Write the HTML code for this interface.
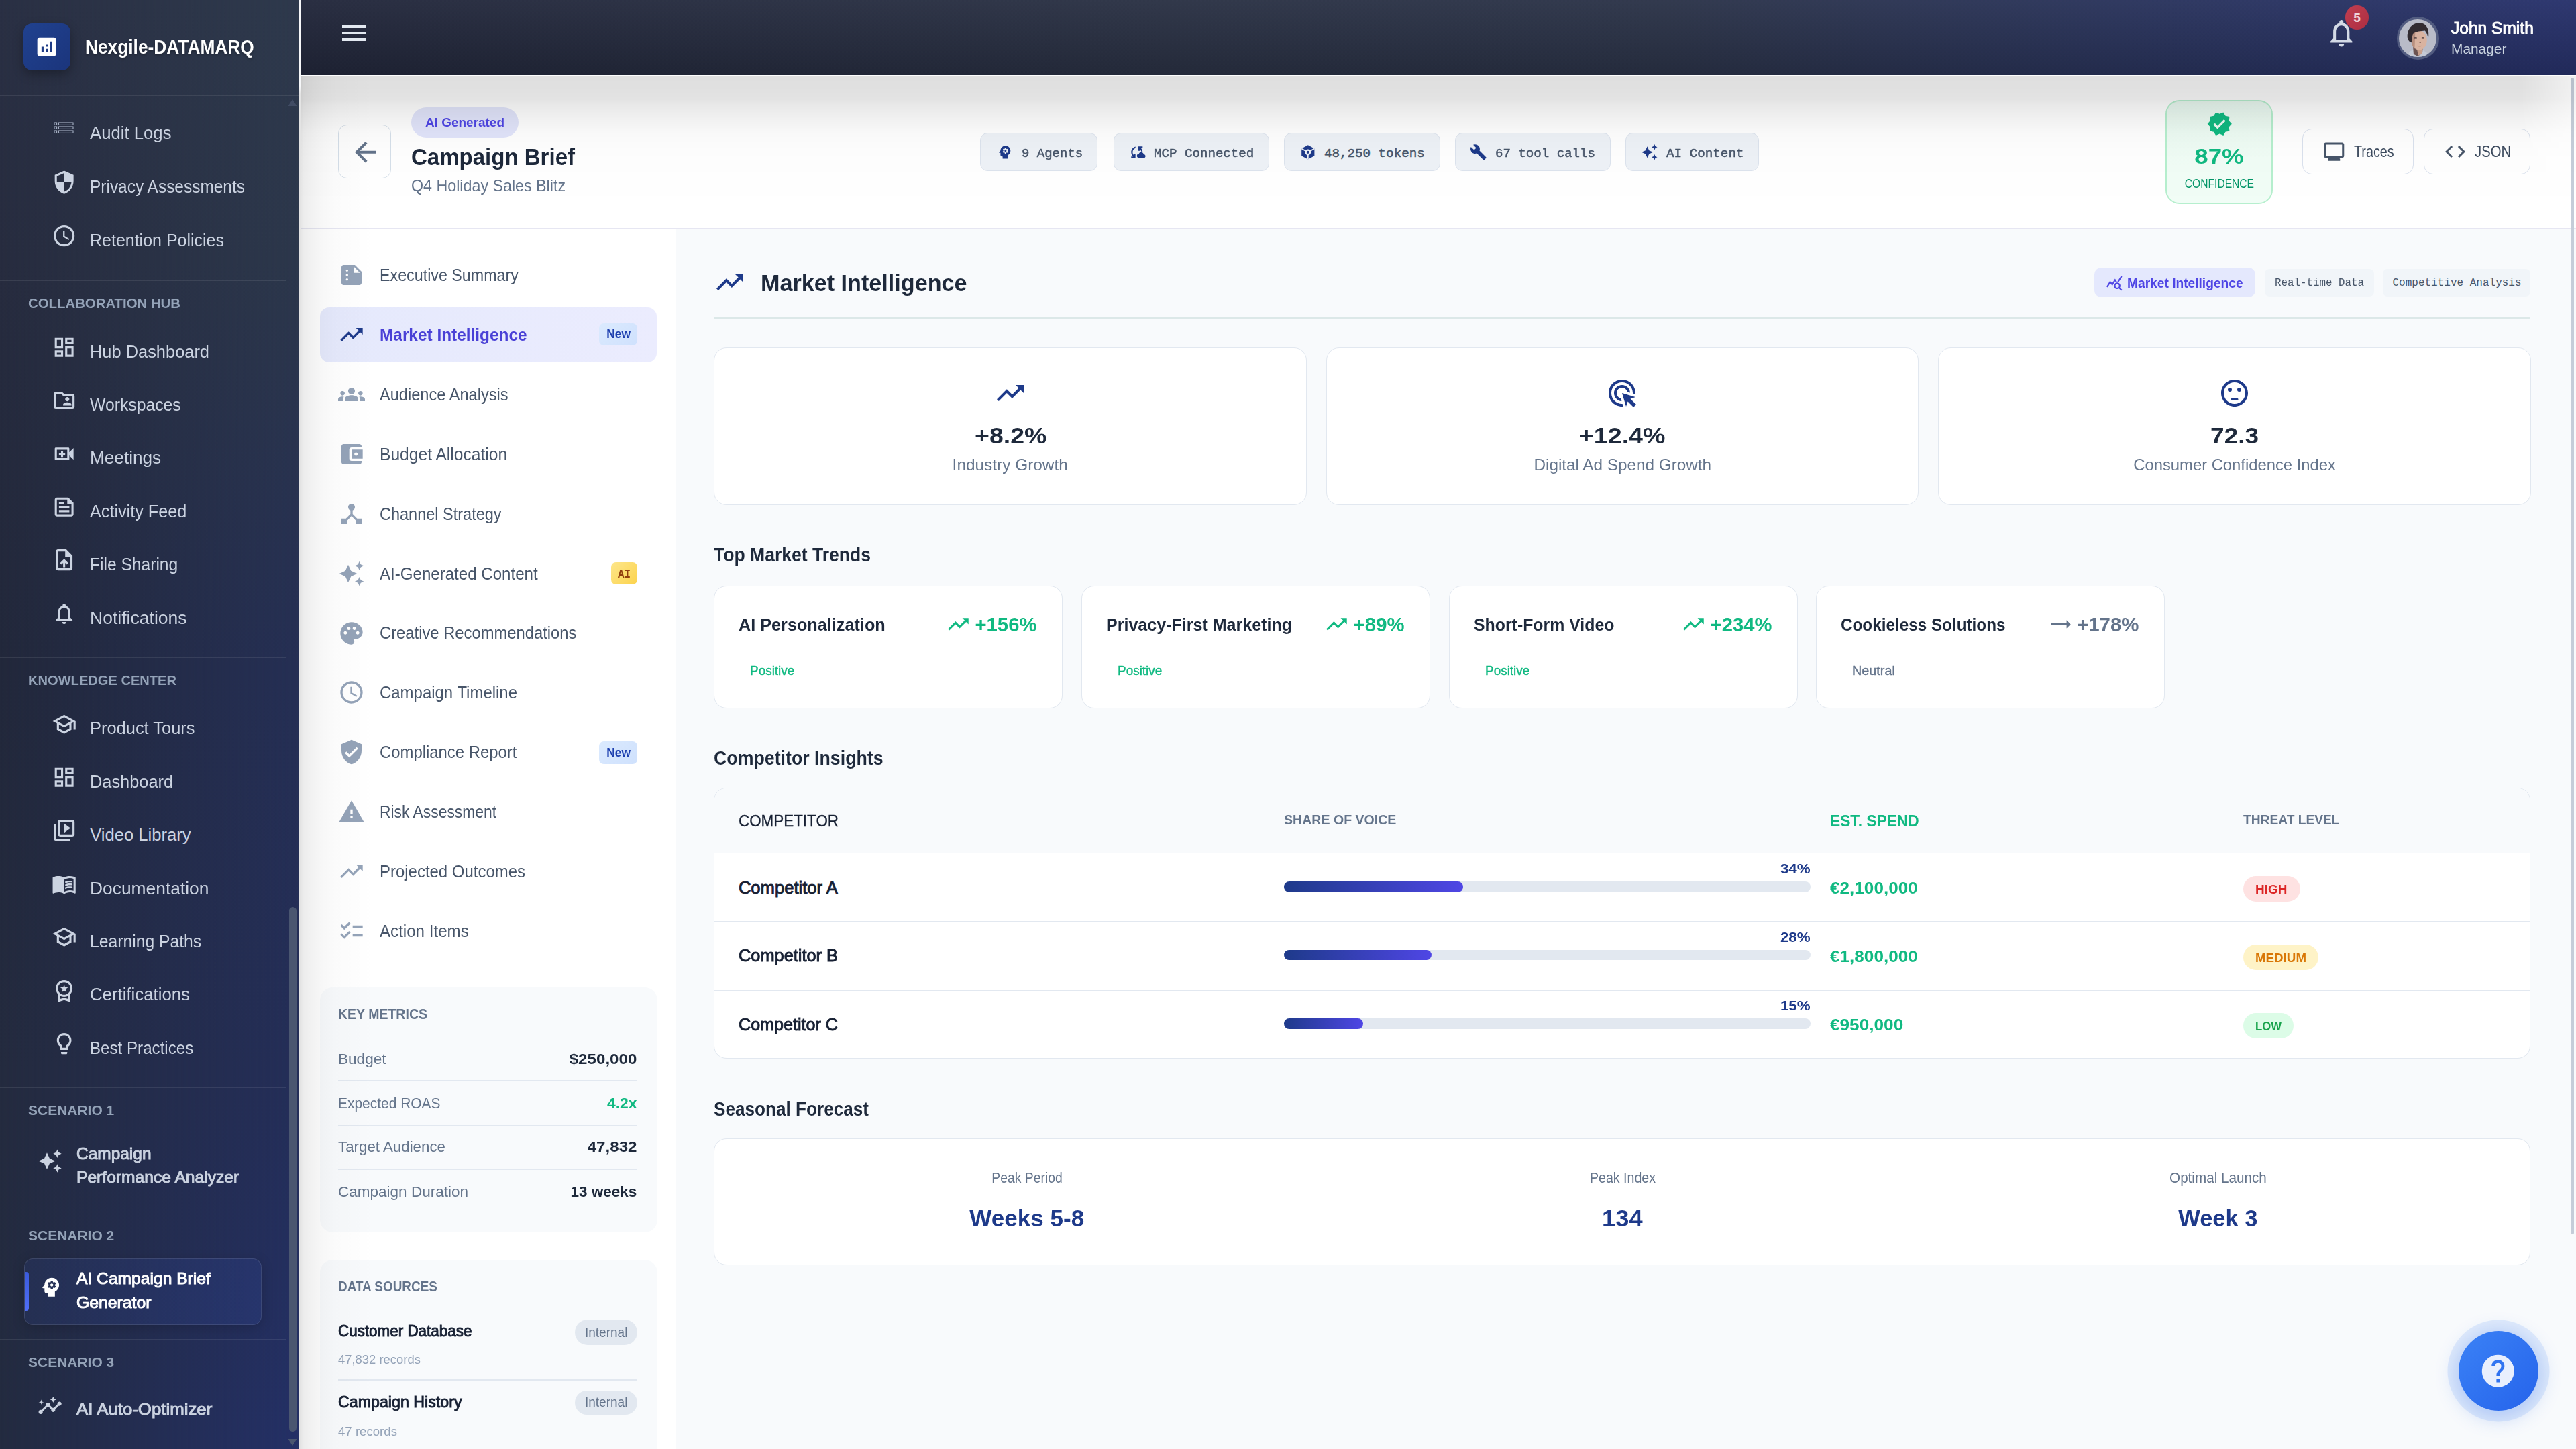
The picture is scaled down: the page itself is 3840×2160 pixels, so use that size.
<!DOCTYPE html>
<html lang="en"><head><meta charset="utf-8"><title>Campaign Brief - Nexgile-DATAMARQ</title>
<style>
html,body{margin:0;padding:0}
body{width:3840px;height:2160px;overflow:hidden;background:#f8fafc;font-family:"Liberation Sans",Arial,sans-serif;position:relative}
div,span,svg,nav,aside,header,main,section{position:absolute;box-sizing:border-box;display:block}
span{white-space:nowrap;line-height:1}
.card{background:#fff;border:1.6px solid #e2e8f0;border-radius:19px}
.chip{background:#eef2f7;border:1.6px solid #dde4ee;border-radius:11px}
.pill{border-radius:999px}
.hr{height:1.6px;background:#e2e8f0}
span.m{font-family:"Liberation Mono","DejaVu Sans Mono",monospace}
.sdiv{height:1.6px;background:rgba(255,255,255,.09);left:0;width:426px}

</style></head>
<body>
<main style="left:0;top:0;width:3840px;height:2160px">
<div style="left:448px;top:112px;width:3392px;height:228.5px;background:#fff;border-bottom:1.6px solid #e6e6f2"></div>
<div style="left:446px;top:0px;width:2px;height:2160px;background:linear-gradient(180deg,#f6f7f9 0,#f6f7f9 128px,#e3e3e3 140px,#e3e3e3 100%)"></div>
<div style="left:448px;top:340.5px;width:559.8px;height:1820px;background:#fff;border-right:1.6px solid #e2e8f0"></div>
<div style="left:3832px;top:116px;width:5.2px;height:1724px;background:#c5cdd9;border-radius:3px"></div>
<div style="left:504.2px;top:186.3px;width:79px;height:80px;background:#fff;border:1.6px solid #d6e0ea;border-radius:13px"></div>
<svg style="left:520.5px;top:202.5px;" width="47.5" height="47.5" viewBox="0 0 24 24"><path fill="#64748b" d="M20 11H7.83l5.59-5.59L12 4l-8 8 8 8 1.41-1.41L7.83 13H20v-2z"/></svg>
<div style="left:613px;top:160.4px;width:159.6px;height:44.5px;background:#e2e5fb;border-radius:23px"></div>
<span style="left:633.6px;top:173.2px;font-size:19.2px;color:#4f46e5;font-weight:700;transform:scaleX(0.9880);transform-origin:0 50%;">AI Generated</span>
<span style="left:613.0px;top:215.5px;font-size:35.2px;color:#1e293b;font-weight:700;transform:scaleX(0.9383);transform-origin:0 50%;">Campaign Brief</span>
<span style="left:613.0px;top:264.9px;font-size:24px;color:#64748b;transform:scaleX(0.9687);transform-origin:0 50%;">Q4 Holiday Sales Blitz</span>
<div class="chip" style="left:1461.3px;top:197.5px;width:174.7px;height:57px"></div>
<svg style="left:1485px;top:213.5px;" width="25.6" height="25.6" viewBox="0 0 24 24"><path fill="#1e3a8a" d="M13 8.57c-.79 0-1.43.64-1.43 1.43s.64 1.43 1.43 1.43 1.43-.64 1.43-1.43-.64-1.43-1.43-1.43zM13 3C9.25 3 6.2 5.94 6.02 9.64L4.1 12.2c-.25.33-.01.8.4.8H6v3c0 1.1.9 2 2 2h1v3h7v-4.68c2.36-1.12 4-3.53 4-6.32 0-3.87-3.13-7-7-7zm3 7c0 .13-.01.26-.02.39l.83.66c.08.06.1.16.05.25l-.8 1.39c-.05.09-.16.12-.24.09l-.99-.4c-.21.16-.43.29-.67.39L14 13.83c-.01.1-.1.17-.2.17h-1.6c-.1 0-.18-.07-.2-.17l-.15-1.06c-.25-.1-.47-.23-.68-.39l-.99.4c-.09.03-.2 0-.25-.09l-.8-1.39c-.05-.08-.03-.19.05-.25l.84-.66c-.01-.13-.02-.26-.02-.39s.02-.27.04-.39l-.85-.66c-.08-.06-.1-.16-.05-.26l.8-1.38c.05-.09.15-.12.24-.09l1 .4c.2-.15.43-.29.67-.39L12 6.17c.02-.1.1-.17.2-.17h1.6c.1 0 .18.07.2.17l.15 1.06c.24.1.46.23.67.39l1-.4c.09-.03.2 0 .24.09l.8 1.38c.05.09.03.2-.05.26l-.85.66c.03.12.04.25.04.39z"/></svg>
<span class="m" style="left:1522.8px;top:219.6px;font-size:19.2px;color:#475569;transform:scaleX(0.9900);transform-origin:0 50%;-webkit-text-stroke:.5px #475569;">9 Agents</span>
<div class="chip" style="left:1659.5px;top:197.5px;width:232.2px;height:57px"></div>
<svg style="left:1682px;top:213.5px;" width="25.6" height="25.6" viewBox="0 0 24 24"><path fill="#1e3a8a" d="M21.5 14.98c-.02 0-.03 0-.05.01C21.2 13.300 19.760 12 18 12c-1.400 0-2.600.830-3.160 2.020C13.260 14.100 12 15.400 12 17c0 1.660 1.340 3 3 3l6.500-.020c1.380 0 2.500-1.120 2.500-2.500s-1.120-2.500-2.500-2.500zM10 4.260v2.090C7.670 7.180 6 9.390 6 12c0 1.770.78 3.340 2 4.440V14h2v6H4v-2h2.730C5.060 16.540 4 14.400 4 12c0-3.730 2.550-6.850 6-7.740zM20 6h-2.730c1.430 1.260 2.410 3.010 2.660 5h-2.020c-.23-1.360-.93-2.550-1.910-3.440V10h-2V4h6v2z"/></svg>
<span class="m" style="left:1720.0px;top:219.6px;font-size:19.2px;color:#475569;transform:scaleX(0.9974);transform-origin:0 50%;-webkit-text-stroke:.5px #475569;">MCP Connected</span>
<div class="chip" style="left:1914px;top:197.5px;width:232.6px;height:57px"></div>
<svg style="left:1937px;top:213.5px" width="25.6" height="25.6" viewBox="0 0 24 24"><path fill="#1e3a8a" d="M21 7l-9-5-9 5v10l9 5 9-5V7z"/><path stroke="#eef2f7" stroke-width="1.7" fill="none" d="M12 12v10M12 12L3 7M12 12l9-5"/><circle cx="12" cy="12" r="4.1" fill="#eef2f7"/><circle cx="12" cy="12" r="2" fill="#1e3a8a"/></svg>
<span class="m" style="left:1974.0px;top:219.6px;font-size:19.2px;color:#475569;-webkit-text-stroke:.5px #475569;">48,250 tokens</span>
<div class="chip" style="left:2168.6px;top:197.5px;width:232.2px;height:57px"></div>
<svg style="left:2191px;top:213.5px;" width="25.6" height="25.6" viewBox="0 0 24 24"><path fill="#1e3a8a" d="M22.7 19l-9.1-9.1c.9-2.3.4-5-1.5-6.9-2-2-5-2.4-7.4-1.3L9 6 6 9 1.6 4.7C.4 7.1.9 10.1 2.9 12.1c1.9 1.9 4.6 2.4 6.9 1.5l9.1 9.1c.4.4 1 .4 1.4 0l2.3-2.3c.5-.4.5-1.1.1-1.4z"/></svg>
<span class="m" style="left:2229.0px;top:219.6px;font-size:19.2px;color:#475569;transform:scaleX(0.9954);transform-origin:0 50%;-webkit-text-stroke:.5px #475569;">67 tool calls</span>
<div class="chip" style="left:2423px;top:197.5px;width:198.7px;height:57px"></div>
<svg style="left:2446px;top:213.5px;" width="25.6" height="25.6" viewBox="0 0 24 24"><path fill="#1e3a8a" d="M19 9l1.25-2.75L23 5l-2.75-1.25L19 1l-1.25 2.75L15 5l2.75 1.25L19 9zm-7.5.5L9 4 6.5 9.5 1 12l5.5 2.5L9 20l2.5-5.5L17 12l-5.5-2.5zM19 15l-1.25 2.75L15 19l2.75 1.25L19 23l1.25-2.75L23 19l-2.75-1.25L19 15z"/></svg>
<span class="m" style="left:2483.5px;top:219.6px;font-size:19.2px;color:#475569;transform:scaleX(1.0030);transform-origin:0 50%;-webkit-text-stroke:.5px #475569;">AI Content</span>
<div style="left:3227.7px;top:149.3px;width:160.5px;height:155px;background:linear-gradient(175deg,#e9f9f0,#f1fdf6 60%);border:2.4px solid #b6efce;border-radius:21px"></div>
<svg style="left:3288.6px;top:165.3px;" width="39.5" height="39.5" viewBox="0 0 24 24"><path fill="#10b981" d="M23 12l-2.44-2.79.34-3.69-3.61-.82-1.89-3.2L12 2.96 8.6 1.5 6.71 4.69 3.1 5.5l.34 3.7L1 12l2.44 2.79-.34 3.7 3.61.82L8.6 22.5l3.4-1.47 3.4 1.46 1.89-3.19 3.61-.82-.34-3.69L23 12zm-12.91 4.72l-3.8-3.81 1.48-1.48 2.32 2.33 5.85-5.87 1.48 1.48-7.33 7.35z"/></svg>
<span style="left:3276.0px;top:217.1px;font-size:32px;color:#10b981;font-weight:700;transform:scaleX(1.1460);transform-origin:50% 50%;">87%</span>
<span style="left:3244.6px;top:264.2px;font-size:19.2px;color:#059669;transform:scaleX(0.8135);transform-origin:50% 50%;">CONFIDENCE</span>
<div style="left:3432.3px;top:192.4px;width:165.5px;height:68px;background:#fff;border:1.6px solid #dbe2ee;border-radius:14px"></div>
<svg style="left:3461.4px;top:207.9px;" width="36.3" height="36.3" viewBox="0 0 24 24"><path fill="#475569" d="M20 3H4c-1.1 0-2 .9-2 2v11c0 1.1.9 2 2 2h3l-1 1v2h12v-2l-1-1h3c1.1 0 2-.9 2-2V5c0-1.1-.9-2-2-2zm0 13H4V5h16v11z"/></svg>
<span style="left:3509.0px;top:213.8px;font-size:24px;color:#3d4b5f;transform:scaleX(0.8238);transform-origin:0 50%;">Traces</span>
<div style="left:3613.4px;top:192.4px;width:158.8px;height:68px;background:#fff;border:1.6px solid #dbe2ee;border-radius:14px"></div>
<svg style="left:3642.3px;top:208px;" width="36" height="36" viewBox="0 0 24 24"><path fill="#475569" d="M9.4 16.6L4.8 12l4.6-4.6L8 6l-6 6 6 6 1.4-1.4zm5.2 0l4.6-4.6-4.6-4.6L16 6l6 6-6 6-1.4-1.4z"/></svg>
<span style="left:3688.7px;top:213.8px;font-size:24px;color:#3d4b5f;transform:scaleX(0.8451);transform-origin:0 50%;">JSON</span>
<nav aria-label="Brief sections" style="left:0;top:0;width:0;height:0">
<div style="left:477px;top:457.7px;width:501.5px;height:82px;background:linear-gradient(90deg,#e5e9fc,#ebecfe);border-radius:14px"></div>
<svg style="left:504px;top:390.3px;" width="40" height="40" viewBox="0 0 24 24"><path fill="#94a3b8" d="M15 3H5c-1.1 0-1.99.9-1.99 2L3 19c0 1.1.89 2 1.99 2H19c1.1 0 2-.9 2-2V9l-6-6zM8 17c-.55 0-1-.45-1-1s.45-1 1-1 1 .45 1 1-.45 1-1 1zm0-4c-.55 0-1-.45-1-1s.45-1 1-1 1 .45 1 1-.45 1-1 1zm0-4c-.55 0-1-.45-1-1s.45-1 1-1 1 .45 1 1-.45 1-1 1zm6 1V4.5l5.5 5.5H14z"/></svg>
<span style="left:565.7px;top:398.1px;font-size:25.6px;color:#475569;transform:scaleX(0.9091);transform-origin:0 50%;">Executive Summary</span>
<svg style="left:504px;top:479.17px;" width="40" height="40" viewBox="0 0 24 24"><path fill="#1e3a8a" d="M16 6l2.29 2.29-4.88 4.88-4-4L2 16.59 3.41 18l6-6 4 4 6.3-6.29L22 12V6z"/></svg>
<span style="left:565.7px;top:487.0px;font-size:25.6px;color:#4a41d6;font-weight:700;transform:scaleX(0.9530);transform-origin:0 50%;">Market Intelligence</span>
<svg style="left:504px;top:568.04px;" width="40" height="40" viewBox="0 0 24 24"><path fill="#94a3b8" d="M12 12.75c1.63 0 3.07.39 4.24.9 1.08.48 1.76 1.56 1.76 2.73V18H6v-1.61c0-1.18.68-2.26 1.76-2.73 1.17-.52 2.61-.91 4.24-.91zM4 13c1.1 0 2-.9 2-2s-.9-2-2-2-2 .9-2 2 .9 2 2 2zm1.13 1.1c-.37-.06-.74-.1-1.13-.1-.99 0-1.93.21-2.78.58C.48 14.9 0 15.62 0 16.43V18h4.5v-1.61c0-.83.23-1.61.63-2.29zM20 13c1.1 0 2-.9 2-2s-.9-2-2-2-2 .9-2 2 .9 2 2 2zm4 3.43c0-.81-.48-1.53-1.22-1.85-.85-.37-1.79-.58-2.78-.58-.39 0-.76.04-1.13.1.4.68.63 1.46.63 2.29V18H24v-1.57zM12 6c1.66 0 3 1.34 3 3s-1.34 3-3 3-3-1.34-3-3 1.34-3 3-3z"/></svg>
<span style="left:565.7px;top:575.9px;font-size:25.6px;color:#475569;transform:scaleX(0.9223);transform-origin:0 50%;">Audience Analysis</span>
<svg style="left:504px;top:656.91px;" width="40" height="40" viewBox="0 0 24 24"><path fill="#94a3b8" d="M21 18v1c0 1.1-.9 2-2 2H5c-1.11 0-2-.9-2-2V5c0-1.1.89-2 2-2h14c1.1 0 2 .9 2 2v1h-9c-1.11 0-2 .9-2 2v8c0 1.1.89 2 2 2h9zm-9-2h10V8H12v8zm4-2.5c-.83 0-1.5-.67-1.5-1.5s.67-1.5 1.5-1.5 1.5.67 1.5 1.5-.67 1.5-1.5 1.5z"/></svg>
<span style="left:565.7px;top:664.8px;font-size:25.6px;color:#475569;transform:scaleX(0.9611);transform-origin:0 50%;">Budget Allocation</span>
<svg style="left:504px;top:745.78px;" width="40" height="40" viewBox="0 0 24 24"><path fill="#94a3b8" d="M17 16l-4-4V8.82C14.16 8.4 15 7.3 15 6c0-1.66-1.34-3-3-3S9 4.34 9 6c0 1.3.84 2.4 2 2.82V12l-4 4H3v5h5v-3.05l4-4.2 4 4.2V21h5v-5h-4z"/></svg>
<span style="left:565.7px;top:753.6px;font-size:25.6px;color:#475569;transform:scaleX(0.9183);transform-origin:0 50%;">Channel Strategy</span>
<svg style="left:504px;top:834.65px;" width="40" height="40" viewBox="0 0 24 24"><path fill="#94a3b8" d="M19 9l1.25-2.75L23 5l-2.75-1.25L19 1l-1.25 2.75L15 5l2.75 1.25L19 9zm-7.5.5L9 4 6.5 9.5 1 12l5.5 2.5L9 20l2.5-5.5L17 12l-5.5-2.5zM19 15l-1.25 2.75L15 19l2.75 1.25L19 23l1.25-2.75L23 19l-2.75-1.25L19 15z"/></svg>
<span style="left:565.7px;top:842.5px;font-size:25.6px;color:#475569;transform:scaleX(0.9409);transform-origin:0 50%;">AI-Generated Content</span>
<svg style="left:504px;top:923.52px;" width="40" height="40" viewBox="0 0 24 24"><path fill="#94a3b8" d="M12 2C6.49 2 2 6.49 2 12s4.49 10 10 10c1.38 0 2.5-1.12 2.5-2.5 0-.61-.23-1.2-.64-1.67-.08-.1-.13-.21-.13-.33 0-.28.22-.5.5-.5H16c3.31 0 6-2.69 6-6 0-4.96-4.49-9-10-9zm5.5 11c-.83 0-1.5-.67-1.5-1.5s.67-1.5 1.5-1.5 1.5.67 1.5 1.5-.67 1.5-1.5 1.5zm-3-4c-.83 0-1.5-.67-1.5-1.5S13.67 6 14.5 6s1.5.67 1.5 1.5S15.33 9 14.5 9zM5 11.5c0-.83.67-1.5 1.5-1.5s1.5.67 1.5 1.5S7.33 13 6.5 13 5 12.33 5 11.5zm6-4c0 .83-.67 1.5-1.5 1.5S8 8.33 8 7.5 8.67 6 9.5 6s1.5.67 1.5 1.5z"/></svg>
<span style="left:565.7px;top:931.4px;font-size:25.6px;color:#475569;transform:scaleX(0.9290);transform-origin:0 50%;">Creative Recommendations</span>
<svg style="left:504px;top:1012.39px;" width="40" height="40" viewBox="0 0 24 24"><path fill="#94a3b8" d="M11.99 2C6.47 2 2 6.48 2 12s4.47 10 9.99 10C17.52 22 22 17.52 22 12S17.52 2 11.99 2zM12 20c-4.42 0-8-3.58-8-8s3.58-8 8-8 8 3.58 8 8-3.58 8-8 8zm.5-13H11v6l5.25 3.15.75-1.23-4.5-2.67z"/></svg>
<span style="left:565.7px;top:1020.2px;font-size:25.6px;color:#475569;transform:scaleX(0.9357);transform-origin:0 50%;">Campaign Timeline</span>
<svg style="left:504px;top:1101.26px;" width="40" height="40" viewBox="0 0 24 24"><path fill="#94a3b8" d="M12 1L3 5v6c0 5.55 3.84 10.74 9 12 5.16-1.26 9-6.45 9-12V5l-9-4zm-2 16l-4-4 1.41-1.41L10 14.17l6.59-6.59L18 9l-8 8z"/></svg>
<span style="left:565.7px;top:1109.1px;font-size:25.6px;color:#475569;transform:scaleX(0.9325);transform-origin:0 50%;">Compliance Report</span>
<svg style="left:504px;top:1190.13px;" width="40" height="40" viewBox="0 0 24 24"><path fill="#94a3b8" d="M1 21h22L12 2 1 21zm12-3h-2v-2h2v2zm0-4h-2v-4h2v4z"/></svg>
<span style="left:565.7px;top:1198.0px;font-size:25.6px;color:#475569;transform:scaleX(0.8935);transform-origin:0 50%;">Risk Assessment</span>
<svg style="left:504px;top:1279px;" width="40" height="40" viewBox="0 0 24 24"><path fill="#94a3b8" d="M16 6l2.29 2.29-4.88 4.88-4-4L2 16.59 3.41 18l6-6 4 4 6.3-6.29L22 12V6z"/></svg>
<span style="left:565.7px;top:1286.8px;font-size:25.6px;color:#475569;transform:scaleX(0.9358);transform-origin:0 50%;">Projected Outcomes</span>
<svg style="left:504px;top:1367.87px;" width="40" height="40" viewBox="0 0 24 24"><path fill="#94a3b8" d="M22 7h-9v2h9V7zm0 8h-9v2h9v-2zM5.54 11L2 7.46l1.41-1.41 2.12 2.12 4.24-4.24 1.41 1.41L5.54 11zm0 8L2 15.46l1.41-1.41 2.12 2.12 4.24-4.24 1.41 1.41L5.54 19z"/></svg>
<span style="left:565.7px;top:1375.7px;font-size:25.6px;color:#475569;transform:scaleX(0.9423);transform-origin:0 50%;">Action Items</span>
<div style="left:893px;top:482.1px;width:57.4px;height:33.3px;background:linear-gradient(135deg,#dbeafe,#cfe1fd);border-radius:7px"></div>
<span style="left:903.6px;top:490.1px;font-size:17.6px;color:#1e40af;font-weight:700;transform:scaleX(0.9810);transform-origin:50% 50%;">New</span>
<div style="left:910.5px;top:838.2px;width:39.2px;height:32.8px;background:linear-gradient(135deg,#fde68a,#fcd34d);border-radius:7px"></div>
<span class="m" style="left:919.5px;top:847.6px;font-size:17.6px;color:#92400e;font-weight:700;transform:scaleX(0.8994);transform-origin:50% 50%;">AI</span>
<div style="left:893px;top:1105.3px;width:57.4px;height:33.6px;background:linear-gradient(135deg,#dbeafe,#cfe1fd);border-radius:7px"></div>
<span style="left:903.6px;top:1113.5px;font-size:17.6px;color:#1e40af;font-weight:700;transform:scaleX(0.9810);transform-origin:50% 50%;">New</span>
</nav>
<section aria-label="Key metrics and data sources" style="left:0;top:0;width:0;height:0">
<div style="left:477px;top:1472px;width:502.5px;height:364.6px;background:#f8fafc;border-radius:19px"></div>
<span style="left:504.3px;top:1501.0px;font-size:22.4px;color:#64748b;font-weight:700;transform:scaleX(0.8714);transform-origin:0 50%;">KEY METRICS</span>
<span style="left:504.3px;top:1567.5px;font-size:22.4px;color:#64748b;transform:scaleX(1.0075);transform-origin:0 50%;">Budget</span>
<span style="left:856.3px;top:1567.5px;font-size:22.4px;color:#1e293b;font-weight:700;transform:scaleX(1.0783);transform-origin:100% 50%;">$250,000</span>
<div class="hr" style="left:504.3px;top:1610.3px;width:445.4px"></div>
<span style="left:504.3px;top:1634.0px;font-size:22.4px;color:#64748b;transform:scaleX(0.9353);transform-origin:0 50%;">Expected ROAS</span>
<span style="left:906.1px;top:1634.0px;font-size:22.4px;color:#10b981;font-weight:700;transform:scaleX(1.0254);transform-origin:100% 50%;">4.2x</span>
<div class="hr" style="left:504.3px;top:1676.8px;width:445.4px"></div>
<span style="left:504.3px;top:1699.3px;font-size:22.4px;color:#64748b;transform:scaleX(0.9963);transform-origin:0 50%;">Target Audience</span>
<span style="left:881.2px;top:1699.3px;font-size:22.4px;color:#1e293b;font-weight:700;transform:scaleX(1.0776);transform-origin:100% 50%;">47,832</span>
<div class="hr" style="left:504.3px;top:1742.1px;width:445.4px"></div>
<span style="left:504.3px;top:1765.7px;font-size:22.4px;color:#64748b;transform:scaleX(1.0056);transform-origin:0 50%;">Campaign Duration</span>
<span style="left:851.3px;top:1765.7px;font-size:22.4px;color:#1e293b;font-weight:700;transform:scaleX(1.0045);transform-origin:100% 50%;">13 weeks</span>
<div style="left:477px;top:1878.3px;width:502.5px;height:300px;background:#f8fafc;border-radius:19px"></div>
<span style="left:504.3px;top:1906.8px;font-size:22.4px;color:#64748b;font-weight:700;transform:scaleX(0.8452);transform-origin:0 50%;">DATA SOURCES</span>
<span style="left:504.3px;top:1972.3px;font-size:24px;color:#172033;transform:scaleX(0.9342);transform-origin:0 50%;-webkit-text-stroke:0.95px #172033;">Customer Database</span>
<div style="left:857.2px;top:1967.4px;width:92.5px;height:37.6px;background:#e2e8f0;border-radius:20px"></div>
<span style="left:868.8px;top:1975.7px;font-size:20.8px;color:#64748b;transform:scaleX(0.9139);transform-origin:50% 50%;">Internal</span>
<span style="left:504.3px;top:2017.4px;font-size:19.2px;color:#94a3b8;transform:scaleX(0.9602);transform-origin:0 50%;">47,832 records</span>
<span style="left:504.3px;top:2077.8px;font-size:24px;color:#172033;transform:scaleX(0.9673);transform-origin:0 50%;-webkit-text-stroke:0.95px #172033;">Campaign History</span>
<div style="left:857.2px;top:2072.8px;width:92.5px;height:36.2px;background:#e2e8f0;border-radius:20px"></div>
<span style="left:868.8px;top:2080.4px;font-size:20.8px;color:#64748b;transform:scaleX(0.9139);transform-origin:50% 50%;">Internal</span>
<span style="left:504.3px;top:2123.6px;font-size:19.2px;color:#94a3b8;transform:scaleX(0.9707);transform-origin:0 50%;">47 records</span>
<div class="hr" style="left:504.3px;top:2056px;width:445.4px"></div>
</section>
<svg style="left:1064px;top:396.5px;" width="48" height="48" viewBox="0 0 24 24"><path fill="#1e3a8a" d="M16 6l2.29 2.29-4.88 4.88-4-4L2 16.59 3.41 18l6-6 4 4 6.3-6.29L22 12V6z"/></svg>
<span style="left:1134.0px;top:403.7px;font-size:35.2px;color:#1e293b;font-weight:700;transform:scaleX(0.9707);transform-origin:0 50%;">Market Intelligence</span>
<div style="left:1064.4px;top:472.4px;width:2708px;height:3px;background:#dce8e8"></div>
<div style="left:3121.5px;top:398.8px;width:240px;height:44.7px;background:#e4e8fd;border-radius:10px"></div>
<svg style="left:3139px;top:408.5px;" width="25.6" height="25.6" viewBox="0 0 24 24"><path fill="#4f46e5" d="M19.88 18.47c.44-.7.7-1.51.7-2.39 0-2.49-2.01-4.5-4.5-4.5s-4.5 2.01-4.5 4.5 2.01 4.5 4.49 4.5c.88 0 1.7-.26 2.39-.7L21.58 23 23 21.58l-3.12-3.11zm-3.8.11c-1.38 0-2.5-1.12-2.5-2.5s1.12-2.5 2.5-2.5 2.5 1.12 2.5 2.5-1.12 2.5-2.5 2.5zm-.36-8.5c-.74.02-1.45.18-2.1.45l-.55-.83-3.8 6.18-3.01-3.52-3.63 5.81L1 17l5-8 3 3.5L13 6l2.72 4.08zm2.59.5c-.64-.28-1.33-.45-2.05-.49L21.38 2 23 3.18l-4.69 7.4z"/></svg>
<span style="left:3171.4px;top:411.6px;font-size:20.2px;color:#4f46e5;font-weight:700;transform:scaleX(0.9497);transform-origin:0 50%;">Market Intelligence</span>
<div style="left:3375.7px;top:400.6px;width:163.3px;height:41px;background:#f1f5f9;border-radius:7px"></div>
<span class="m" style="left:3390.6px;top:414.3px;font-size:16px;color:#475569;transform:scaleX(0.9894);transform-origin:0 50%;">Real-time Data</span>
<div style="left:3552px;top:400.6px;width:220.2px;height:41px;background:#f1f5f9;border-radius:7px"></div>
<span class="m" style="left:3566.5px;top:414.3px;font-size:16px;color:#475569;">Competitive Analysis</span>
<div class="card" style="left:1064.4px;top:518.4px;width:883.5px;height:235px"></div>
<svg style="left:1482.15px;top:562px;" width="48" height="48" viewBox="0 0 24 24"><path fill="#1e3a8a" d="M16 6l2.29 2.29-4.88 4.88-4-4L2 16.59 3.41 18l6-6 4 4 6.3-6.29L22 12V6z"/></svg>
<span style="left:1457.5px;top:631.5px;font-size:34px;color:#1e293b;font-weight:700;transform:scaleX(1.1021);transform-origin:50% 50%;">+8.2%</span>
<span style="left:1421.4px;top:681.2px;font-size:24px;color:#64748b;transform:scaleX(1.0165);transform-origin:50% 50%;">Industry Growth</span>
<div class="card" style="left:1976.7px;top:518.4px;width:883.5px;height:235px"></div>
<svg style="left:2394.45px;top:562px;" width="48" height="48" viewBox="0 0 24 24"><path fill="#1e3a8a" d="M11.71 17.99C8.53 17.84 6 15.22 6 12c0-3.31 2.69-6 6-6 3.22 0 5.84 2.53 5.99 5.71l-2.1-.63C15.48 9.31 13.89 8 12 8c-2.21 0-4 1.79-4 4 0 1.89 1.31 3.48 3.08 3.89l.63 2.1zM22 12c0 .3-.01.6-.04.9l-1.97-.59c.01-.1.01-.21.01-.31 0-4.42-3.58-8-8-8s-8 3.58-8 8 3.58 8 8 8c.1 0 .21 0 .31-.01l.59 1.970c-.3.03-.6.04-.9.04-5.52 0-10-4.48-10-10S6.480 2 12 2s10 4.480 10 10zm-3.770 4.260L22 15l-10-3 3 10 1.260-3.770 4.270 4.270 1.980-1.980-4.280-4.260z"/></svg>
<span style="left:2360.3px;top:631.5px;font-size:34px;color:#1e293b;font-weight:700;transform:scaleX(1.1061);transform-origin:50% 50%;">+12.4%</span>
<span style="left:2287.7px;top:681.2px;font-size:24px;color:#64748b;transform:scaleX(1.0119);transform-origin:50% 50%;">Digital Ad Spend Growth</span>
<div class="card" style="left:2889px;top:518.4px;width:883.5px;height:235px"></div>
<svg style="left:3306.75px;top:562px;" width="48" height="48" viewBox="0 0 24 24"><path fill="#1e3a8a" d="M15.5 11a1.5 1.5 0 1 0 0-3 1.5 1.5 0 0 0 0 3zm-7 0a1.5 1.5 0 1 0 0-3 1.5 1.5 0 0 0 0 3zM11.99 2C6.47 2 2 6.48 2 12s4.47 10 9.99 10C17.52 22 22 17.52 22 12S17.52 2 11.99 2zM12 20c-4.42 0-8-3.58-8-8s3.58-8 8-8 8 3.58 8 8-3.58 8-8 8zm0-4c-.73 0-1.38-.18-1.96-.52-.12.14-.86.98-1.01 1.15.86.55 1.87.87 2.97.87 1.11 0 2.12-.33 2.98-.88-.97-1.09-.01-.02-1.01-1.15-.59.35-1.24.53-1.97.53z"/></svg>
<span style="left:3297.7px;top:631.5px;font-size:34px;color:#1e293b;font-weight:700;transform:scaleX(1.0878);transform-origin:50% 50%;">72.3</span>
<span style="left:3178.7px;top:681.2px;font-size:24px;color:#64748b;transform:scaleX(0.9912);transform-origin:50% 50%;">Consumer Confidence Index</span>
<span style="left:1064.4px;top:812.7px;font-size:28.8px;color:#1e293b;font-weight:700;transform:scaleX(0.9217);transform-origin:0 50%;">Top Market Trends</span>
<div class="card" style="left:1064.4px;top:872.8px;width:519.6px;height:183.4px"></div>
<span style="left:1100.9px;top:919.2px;font-size:25.6px;color:#1e293b;font-weight:700;transform:scaleX(0.9858);transform-origin:0 50%;">AI Personalization</span>
<span style="left:1455.1px;top:917.3px;font-size:28.8px;color:#10b981;font-weight:700;transform:scaleX(1.0169);transform-origin:100% 50%;">+156%</span>
<svg style="left:1410.1px;top:911.8px;" width="36.8" height="36.8" viewBox="0 0 24 24"><path fill="#10b981" d="M16 6l2.29 2.29-4.88 4.88-4-4L2 16.59 3.41 18l6-6 4 4 6.3-6.29L22 12V6z"/></svg>
<span style="left:1118.4px;top:989.8px;font-size:19.2px;color:#10b981;transform:scaleX(0.9868);transform-origin:0 50%;-webkit-text-stroke:.4px #10b981;">Positive</span>
<div class="card" style="left:1612.2px;top:872.8px;width:519.6px;height:183.4px"></div>
<span style="left:1648.7px;top:919.2px;font-size:25.6px;color:#1e293b;font-weight:700;transform:scaleX(0.9786);transform-origin:0 50%;">Privacy-First Marketing</span>
<span style="left:2018.9px;top:917.3px;font-size:28.8px;color:#10b981;font-weight:700;transform:scaleX(1.0167);transform-origin:100% 50%;">+89%</span>
<svg style="left:1974.2px;top:911.8px;" width="36.8" height="36.8" viewBox="0 0 24 24"><path fill="#10b981" d="M16 6l2.29 2.29-4.88 4.88-4-4L2 16.59 3.41 18l6-6 4 4 6.3-6.29L22 12V6z"/></svg>
<span style="left:1666.2px;top:989.8px;font-size:19.2px;color:#10b981;transform:scaleX(0.9868);transform-origin:0 50%;-webkit-text-stroke:.4px #10b981;">Positive</span>
<div class="card" style="left:2160px;top:872.8px;width:519.6px;height:183.4px"></div>
<span style="left:2196.5px;top:919.2px;font-size:25.6px;color:#1e293b;font-weight:700;transform:scaleX(0.9709);transform-origin:0 50%;">Short-Form Video</span>
<span style="left:2550.7px;top:917.3px;font-size:28.8px;color:#10b981;font-weight:700;transform:scaleX(1.0136);transform-origin:100% 50%;">+234%</span>
<svg style="left:2506px;top:911.8px;" width="36.8" height="36.8" viewBox="0 0 24 24"><path fill="#10b981" d="M16 6l2.29 2.29-4.88 4.88-4-4L2 16.59 3.41 18l6-6 4 4 6.3-6.29L22 12V6z"/></svg>
<span style="left:2214.0px;top:989.8px;font-size:19.2px;color:#10b981;transform:scaleX(0.9868);transform-origin:0 50%;-webkit-text-stroke:.4px #10b981;">Positive</span>
<div class="card" style="left:2707.2px;top:872.8px;width:519.6px;height:183.4px"></div>
<span style="left:2743.7px;top:919.2px;font-size:25.6px;color:#1e293b;font-weight:700;transform:scaleX(0.9484);transform-origin:0 50%;">Cookieless Solutions</span>
<span style="left:3097.9px;top:917.3px;font-size:28.8px;color:#64748b;font-weight:700;transform:scaleX(1.0213);transform-origin:100% 50%;">+178%</span>
<svg style="left:3052.5px;top:911.8px;" width="36.8" height="36.8" viewBox="0 0 24 24"><path fill="#64748b" d="M22 12l-4-4v3H3v2h15v3z"/></svg>
<span style="left:2761.2px;top:989.8px;font-size:19.2px;color:#64748b;transform:scaleX(1.0314);transform-origin:0 50%;-webkit-text-stroke:.4px #64748b;">Neutral</span>
<span style="left:1064.4px;top:1116.3px;font-size:28.8px;color:#1e293b;font-weight:700;transform:scaleX(0.9288);transform-origin:0 50%;">Competitor Insights</span>
<div class="card" style="left:1064.4px;top:1173.9px;width:2707.5px;height:404.4px;overflow:hidden"><div style="left:0;top:0;width:100%;height:97px;background:#f8fafc;border-bottom:1.6px solid #e2e8f0"></div><div class="hr" style="left:0;top:198.5px;width:100%"></div><div class="hr" style="left:0;top:301px;width:100%"></div></div>
<span style="left:1100.9px;top:1211.8px;font-size:24px;color:#172033;transform:scaleX(0.9338);transform-origin:0 50%;-webkit-text-stroke:0.3px #172033;">COMPETITOR</span>
<span style="left:1914.0px;top:1211.5px;font-size:20.8px;color:#64748b;font-weight:700;transform:scaleX(0.9407);transform-origin:0 50%;">SHARE OF VOICE</span>
<span style="left:2727.6px;top:1211.8px;font-size:24px;color:#10b981;font-weight:700;transform:scaleX(0.9475);transform-origin:0 50%;">EST. SPEND</span>
<span style="left:3344.0px;top:1211.5px;font-size:20.8px;color:#64748b;font-weight:700;transform:scaleX(0.9223);transform-origin:0 50%;">THREAT LEVEL</span>
<span style="left:1100.9px;top:1310.7px;font-size:25.6px;color:#172033;-webkit-text-stroke:0.95px #172033;">Competitor A</span>
<span style="left:2656.8px;top:1285.3px;font-size:20.8px;color:#1e3a8a;font-weight:700;transform:scaleX(1.0739);transform-origin:100% 50%;">34%</span>
<div style="left:1914px;top:1314px;width:785px;height:15.8px;background:#e2e8f0;border-radius:8px"></div>
<div style="left:1914px;top:1314px;width:266.9px;height:15.8px;background:linear-gradient(90deg,#1e3a8a,#4f46e5);border-radius:8px"></div>
<span style="left:2727.6px;top:1312.1px;font-size:24px;color:#10b981;font-weight:700;transform:scaleX(1.0889);transform-origin:0 50%;">€2,100,000</span>
<div style="left:3344px;top:1306.2px;width:84.6px;height:38.3px;background:#fee2e2;border-radius:20px"></div>
<span style="left:3361.9px;top:1315.8px;font-size:19.2px;color:#dc2626;font-weight:700;transform:scaleX(0.9861);transform-origin:0 50%;">HIGH</span>
<span style="left:1100.9px;top:1412.4px;font-size:25.6px;color:#172033;transform:scaleX(0.9909);transform-origin:0 50%;-webkit-text-stroke:0.95px #172033;">Competitor B</span>
<span style="left:2656.8px;top:1387.0px;font-size:20.8px;color:#1e3a8a;font-weight:700;transform:scaleX(1.0739);transform-origin:100% 50%;">28%</span>
<div style="left:1914px;top:1415.7px;width:785px;height:15.8px;background:#e2e8f0;border-radius:8px"></div>
<div style="left:1914px;top:1415.7px;width:219.8px;height:15.8px;background:linear-gradient(90deg,#1e3a8a,#4f46e5);border-radius:8px"></div>
<span style="left:2727.6px;top:1413.8px;font-size:24px;color:#10b981;font-weight:700;transform:scaleX(1.0889);transform-origin:0 50%;">€1,800,000</span>
<div style="left:3344px;top:1407.9px;width:111.8px;height:38.3px;background:#fef3c7;border-radius:20px"></div>
<span style="left:3361.9px;top:1417.5px;font-size:19.2px;color:#d97706;font-weight:700;transform:scaleX(0.9767);transform-origin:0 50%;">MEDIUM</span>
<span style="left:1100.9px;top:1514.6px;font-size:25.6px;color:#172033;transform:scaleX(0.9817);transform-origin:0 50%;-webkit-text-stroke:0.95px #172033;">Competitor C</span>
<span style="left:2656.8px;top:1489.2px;font-size:20.8px;color:#1e3a8a;font-weight:700;transform:scaleX(1.0739);transform-origin:100% 50%;">15%</span>
<div style="left:1914px;top:1517.9px;width:785px;height:15.8px;background:#e2e8f0;border-radius:8px"></div>
<div style="left:1914px;top:1517.9px;width:117.75px;height:15.8px;background:linear-gradient(90deg,#1e3a8a,#4f46e5);border-radius:8px"></div>
<span style="left:2727.6px;top:1516.0px;font-size:24px;color:#10b981;font-weight:700;transform:scaleX(1.0908);transform-origin:0 50%;">€950,000</span>
<div style="left:3344px;top:1510.1px;width:74.9px;height:38.3px;background:#dcfce7;border-radius:20px"></div>
<span style="left:3361.9px;top:1519.7px;font-size:19.2px;color:#16a34a;font-weight:700;transform:scaleX(0.8734);transform-origin:0 50%;">LOW</span>
<span style="left:1064.4px;top:1638.6px;font-size:28.8px;color:#1e293b;font-weight:700;transform:scaleX(0.9077);transform-origin:0 50%;">Seasonal Forecast</span>
<div class="card" style="left:1064.4px;top:1697.1px;width:2707.5px;height:188.6px"></div>
<span style="left:1469.8px;top:1745.4px;font-size:22.4px;color:#64748b;transform:scaleX(0.8649);transform-origin:50% 50%;">Peak Period</span>
<span style="left:1445.0px;top:1797.5px;font-size:35.2px;color:#1e3a8a;font-weight:700;transform:scaleX(0.9959);transform-origin:50% 50%;">Weeks 5-8</span>
<span style="left:2362.8px;top:1745.4px;font-size:22.4px;color:#64748b;transform:scaleX(0.8748);transform-origin:50% 50%;">Peak Index</span>
<span style="left:2389.4px;top:1797.5px;font-size:35.2px;color:#1e3a8a;font-weight:700;transform:scaleX(1.0303);transform-origin:50% 50%;">134</span>
<span style="left:3228.0px;top:1745.4px;font-size:22.4px;color:#64748b;transform:scaleX(0.9227);transform-origin:50% 50%;">Optimal Launch</span>
<span style="left:3246.1px;top:1797.5px;font-size:35.2px;color:#1e3a8a;font-weight:700;transform:scaleX(0.9798);transform-origin:50% 50%;">Week 3</span>
<div style="left:3664.5px;top:1984px;width:119.3px;height:119.3px;border-radius:50%;background:linear-gradient(135deg,#3b82f6,#2563eb);box-shadow:0 0 0 16.5px rgba(59,130,246,.13),0 6px 30px 4px rgba(37,99,235,.28)"></div>
<svg style="left:3695px;top:2014.8px;" width="57.6" height="57.6" viewBox="0 0 24 24"><path fill="#e9effd" d="M12 2C6.48 2 2 6.48 2 12s4.48 10 10 10 10-4.48 10-10S17.520 2 12 2zm1 17h-2v-2h2v2zm2.070-7.750l-.9.92C13.450 12.900 13 13.500 13 15h-2v-.5c0-1.100.45-2.100 1.170-2.830l1.240-1.260c.370-.360.590-.860.590-1.410 0-1.100-.9-2-2-2s-2 .9-2 2H8c0-2.210 1.790-4 4-4s4 1.790 4 4c0 .880-.360 1.680-.930 2.250z"/></svg>
<div style="left:448px;top:112px;width:3392px;height:200px;background:linear-gradient(180deg,rgba(0,0,0,0.125) 0px,rgba(0,0,0,0.122) 18px,rgba(0,0,0,0.11) 36px,rgba(0,0,0,0.086) 46px,rgba(0,0,0,0.07) 56px,rgba(0,0,0,0.055) 65px,rgba(0,0,0,0.043) 75px,rgba(0,0,0,0.027) 85px,rgba(0,0,0,0.02) 94px,rgba(0,0,0,0.016) 104px,rgba(0,0,0,0.012) 114px,rgba(0,0,0,0.008) 128px,rgba(0,0,0,0.004) 160px,rgba(0,0,0,0) 200px);pointer-events:none;-webkit-mask-image:linear-gradient(90deg,#000 0,#000 3310px,rgba(0,0,0,.45) 3392px);mask-image:linear-gradient(90deg,#000 0,#000 3310px,rgba(0,0,0,.45) 3392px)"></div>
<div style="left:448px;top:112px;width:3392px;height:2.2px;background:rgba(255,255,255,.92)"></div>
<div style="left:448px;top:113px;width:110px;height:2047px;background:linear-gradient(90deg,rgba(0,0,0,0.105) 0px,rgba(0,0,0,0.075) 4px,rgba(0,0,0,0.063) 10px,rgba(0,0,0,0.047) 20px,rgba(0,0,0,0.031) 32px,rgba(0,0,0,0.024) 42px,rgba(0,0,0,0.016) 52px,rgba(0,0,0,0.012) 68px,rgba(0,0,0,0) 110px);pointer-events:none"></div>
</main>
<header style="left:0;top:0;width:3840px;height:112px"><div style="left:448px;top:0;width:3392px;height:112px;background:linear-gradient(180deg,rgba(255,255,255,.03),rgba(0,0,0,.17)),linear-gradient(90deg,#23283c 0,#2b3245 38%,#2c3449 60%,#2a345c 80%,#28326c 100%)"></div>
<svg style="left:504px;top:25.3px;" width="48" height="48" viewBox="0 0 24 24"><path fill="#e2e8f0" d="M3 18h18v-2H3v2zm0-5h18v-2H3v2zm0-7v2h18V6H3z"/></svg>
<svg style="left:3465.5px;top:25px;" width="48.5" height="48.5" viewBox="0 0 24 24"><path fill="#d3dae6" d="M12 22c1.1 0 2-.9 2-2h-4c0 1.1.9 2 2 2zm6-6v-5c0-3.07-1.63-5.64-4.5-6.32V4c0-.83-.67-1.5-1.5-1.5s-1.5.67-1.5 1.5v.68C7.64 5.36 6 7.92 6 11v5l-2 2v1h16v-1l-2-2zm-2 1H8v-6c0-2.48 1.51-4.5 4-4.5s4 2.02 4 4.5v6z"/></svg>
<div style="left:3495.7px;top:8.2px;width:35.6px;height:35.6px;background:linear-gradient(135deg,#c03e50,#ae2e41);border-radius:50%"></div>
<span style="left:3508.2px;top:16.5px;font-size:19.2px;color:#efd3d9;font-weight:700;">5</span>
<div style="left:3572.5px;top:25.3px;width:63.4px;height:63.4px;border-radius:50%;background:#525c80"></div>
<svg style="left:3576.2px;top:29.3px;border-radius:50%" width="55.8" height="55.8" viewBox="0 0 56 56"><rect width="56" height="56" fill="#b9bcc8"/><path d="M12 56l4-8 6-3 14 1 6 4 3 6z" fill="#c4c9d6"/><path d="M21 38l1 14 6 3 7-4 1-12z" fill="#6b5352"/><path d="M27 44l2 10 6-3 1-11z" fill="#c9a08c"/><ellipse cx="30.3" cy="31" rx="11.6" ry="14.6" fill="#d9b3a0"/><path d="M18.5 24c1-3 3-5 6-6l-1 26c-4-4-6-12-5-20z" fill="#b8907f"/><path d="M13 28C11 13 23 3 34 5.500c8 2 12 10 10 23-1-5-2-9-5-12-6 .500-13 1-17.500 4-2 4-2 9-2.500 14-3-1-5-3-6-6.500z" fill="#322c31"/><ellipse cx="24.800" cy="27.500" rx="2.600" ry="1.200" fill="#3a2c2e"/><ellipse cx="36" cy="27.500" rx="2.400" ry="1.200" fill="#3a2c2e"/><path d="M29.500 33.500l3.500.500-1 1.500z" fill="#4a3434"/><path d="M28 39.500c2 .6 4 .6 6 0" stroke="#a87868" stroke-width="1" fill="none"/></svg>
<span style="left:3654.0px;top:29.6px;font-size:24.4px;color:#fff;transform:scaleX(1.0064);transform-origin:0 50%;-webkit-text-stroke:0.9px #fff;">John Smith</span>
<span style="left:3654.0px;top:62.6px;font-size:20.8px;color:#cbd5e1;transform:scaleX(1.0037);transform-origin:0 50%;">Manager</span>
</header>
<aside style="left:0;top:0;width:446px;height:2160px;background:linear-gradient(180deg,#2a3044 0,#272c3f 18%,#22283b 46%,#242b3f 74%,#232b40 100%);border-right:1.2px solid #2c3570"><div style="left:0;top:0;width:100%;height:100%;background:linear-gradient(180deg,#2e394c 0,#2c374b 18%,#252f54 46%,#242e58 74%,#243066 100%);-webkit-mask-image:linear-gradient(90deg,transparent 0,#000 100%);mask-image:linear-gradient(90deg,transparent 0,#000 100%)"></div>
<div style="left:0px;top:141px;width:446px;height:1.6px;background:rgba(255,255,255,.085)"></div>
<div style="left:35.3px;top:35.3px;width:70px;height:70px;background:linear-gradient(135deg,#20418f,#1b357c);border-radius:13px;box-shadow:0 6px 16px rgba(0,0,0,.3)"></div>
<svg style="left:51.4px;top:51.4px;" width="37.2" height="37.2" viewBox="0 0 24 24"><path fill="#fff" d="M19 3H5c-1.1 0-2 .9-2 2v14c0 1.1.9 2 2 2h14c1.1 0 2-.9 2-2V5c0-1.1-.9-2-2-2zM9 17H7v-5h2v5zm4 0h-2v-3h2v3zm0-5h-2v-2h2v2zm4 5h-2V7h2v10z"/></svg>
<span style="left:126.9px;top:56.1px;font-size:28.8px;color:#fff;font-weight:700;transform:scaleX(0.9129);transform-origin:0 50%;text-shadow:0 2px 4px rgba(0,0,0,.3);">Nexgile-DATAMARQ</span>
<div style="left:430.5px;top:1352px;width:11.2px;height:782px;background:#4a5670;border-radius:6px"></div>
<svg style="left:429px;top:147px" width="14" height="12" viewBox="0 0 14 12"><path fill="#414c64" d="M7 1l6.5 10h-13z"/></svg>
<svg style="left:429px;top:2144px" width="14" height="12" viewBox="0 0 14 12"><path fill="#4a5670" d="M7 11L.5 1h13z"/></svg>
<svg style="left:80px;top:182.0px" width="30" height="18" viewBox="0 0 30 18" fill="none" stroke="#aab4c8" stroke-width="1.1"><rect x="1" y="1" width="3.6" height="3.4"/><rect x="7.4" y="1" width="21.6" height="3.4"/><rect x="1" y="7" width="3.6" height="3.4"/><rect x="7.4" y="7" width="21.6" height="3.4"/><rect x="1" y="13" width="3.6" height="3.4"/><rect x="7.4" y="13" width="21.6" height="3.4"/></svg>
<span style="left:134.2px;top:185.8px;font-size:25.6px;color:#cbd3e1;transform:scaleX(1.0045);transform-origin:0 50%;">Audit Logs</span>
<svg style="left:76.5px;top:253.1px;" width="37.3" height="37.3" viewBox="0 0 24 24"><path fill="#cbd3e1" d="M12 1L3 5v6c0 5.55 3.84 10.74 9 12 5.16-1.26 9-6.45 9-12V5l-9-4zm0 10.99h7c-.53 4.12-3.28 7.79-7 8.94V12H5V6.3l7-3.11v8.8z"/></svg>
<span style="left:134.2px;top:265.9px;font-size:25.6px;color:#cbd3e1;transform:scaleX(0.9553);transform-origin:0 50%;">Privacy Assessments</span>
<svg style="left:76.5px;top:333.2px;" width="37.3" height="37.3" viewBox="0 0 24 24"><path fill="#cbd3e1" d="M11.99 2C6.47 2 2 6.48 2 12s4.47 10 9.99 10C17.52 22 22 17.52 22 12S17.52 2 11.99 2zM12 20c-4.42 0-8-3.58-8-8s3.58-8 8-8 8 3.58 8 8-3.58 8-8 8zm.5-13H11v6l5.25 3.15.75-1.23-4.5-2.67z"/></svg>
<span style="left:134.2px;top:346.0px;font-size:25.6px;color:#cbd3e1;transform:scaleX(0.9762);transform-origin:0 50%;">Retention Policies</span>
<div class="sdiv" style="top:417.4px"></div>
<span style="left:42.1px;top:441.7px;font-size:20.8px;color:#94a3b8;font-weight:700;transform:scaleX(0.9792);transform-origin:0 50%;">COLLABORATION HUB</span>
<svg style="left:76.5px;top:498.7px;" width="37.3" height="37.3" viewBox="0 0 24 24"><path fill="#cbd3e1" d="M19 5v2h-4V5h4M9 5v6H5V5h4m10 8v6h-4v-6h4M9 17v2H5v-2h4M21 3h-8v6h8V3zM11 3H3v10h8V3zm10 8h-8v10h8V11zm-10 4H3v6h8v-6z"/></svg>
<span style="left:134.2px;top:511.5px;font-size:25.6px;color:#cbd3e1;transform:scaleX(0.9929);transform-origin:0 50%;">Hub Dashboard</span>
<svg style="left:76.5px;top:578.1px;" width="37.3" height="37.3" viewBox="0 0 24 24"><path fill="#cbd3e1" d="M20 6h-8l-2-2H4c-1.1 0-1.99.9-1.99 2L2 18c0 1.1.9 2 2 2h16c1.1 0 2-.9 2-2V8c0-1.1-.9-2-2-2zm0 12H4V6h5.17l2 2H20v10zm-5-5c1.1 0 2-.9 2-2s-.9-2-2-2-2 .9-2 2 .9 2 2 2zm-4 4h8v-1c0-1.33-2.67-2-4-2s-4 .67-4 2v1z"/></svg>
<span style="left:134.2px;top:590.9px;font-size:25.6px;color:#cbd3e1;transform:scaleX(0.9669);transform-origin:0 50%;">Workspaces</span>
<svg style="left:76.5px;top:657.5px;" width="37.3" height="37.3" viewBox="0 0 24 24"><path fill="#cbd3e1" d="M17 10.5V7c0-.55-.45-1-1-1H4c-.55 0-1 .45-1 1v10c0 .55.45 1 1 1h12c.55 0 1-.45 1-1v-3.5l4 4v-11l-4 4zM15 16H5V8h10v8zm-6-1h2v-2h2v-2h-2V9H9v2H7v2h2z"/></svg>
<span style="left:134.2px;top:670.3px;font-size:25.6px;color:#cbd3e1;transform:scaleX(1.0225);transform-origin:0 50%;">Meetings</span>
<svg style="left:76.5px;top:736.9px;" width="37.3" height="37.3" viewBox="0 0 24 24"><path fill="#cbd3e1" d="M16 3H5c-1.1 0-2 .9-2 2v14c0 1.1.9 2 2 2h14c1.1 0 2-.9 2-2V8l-5-5zm3 16H5V5h10v4h4v10zM7 17h10v-2H7v2zm5-10H7v2h5V7zm-5 6h10v-2H7v2z"/></svg>
<span style="left:134.2px;top:749.7px;font-size:25.6px;color:#cbd3e1;transform:scaleX(0.9842);transform-origin:0 50%;">Activity Feed</span>
<svg style="left:76.5px;top:816.3px;" width="37.3" height="37.3" viewBox="0 0 24 24"><path fill="#cbd3e1" d="M14 2H6c-1.1 0-1.99.9-1.99 2L4 20c0 1.1.89 2 1.99 2H18c1.1 0 2-.9 2-2V8l-6-6zm4 18H6V4h7v5h5v11zM8 15.01l1.41 1.41L11 14.84V19h2v-4.16l1.59 1.59L16 15.01 12.01 11 8 15.01z"/></svg>
<span style="left:134.2px;top:829.1px;font-size:25.6px;color:#cbd3e1;transform:scaleX(0.9606);transform-origin:0 50%;">File Sharing</span>
<svg style="left:76.5px;top:895.7px;" width="37.3" height="37.3" viewBox="0 0 24 24"><path fill="#cbd3e1" d="M12 22c1.1 0 2-.9 2-2h-4c0 1.1.9 2 2 2zm6-6v-5c0-3.07-1.63-5.64-4.5-6.32V4c0-.83-.67-1.5-1.5-1.5s-1.5.67-1.5 1.5v.68C7.64 5.36 6 7.92 6 11v5l-2 2v1h16v-1l-2-2zm-2 1H8v-6c0-2.48 1.51-4.5 4-4.5s4 2.02 4 4.5v6z"/></svg>
<span style="left:134.2px;top:908.5px;font-size:25.6px;color:#cbd3e1;transform:scaleX(1.0373);transform-origin:0 50%;">Notifications</span>
<div class="sdiv" style="top:979px"></div>
<span style="left:42.1px;top:1003.6px;font-size:20.8px;color:#94a3b8;font-weight:700;transform:scaleX(0.9660);transform-origin:0 50%;">KNOWLEDGE CENTER</span>
<svg style="left:76.5px;top:1060.5px;" width="37.3" height="37.3" viewBox="0 0 24 24"><path fill="#cbd3e1" d="M12 3L1 9l4 2.18v6L12 21l7-3.82v-6l2-1.09V17h2V9L12 3zm6.82 6L12 12.72 5.18 9 12 5.28 18.82 9zM17 15.99l-5 2.73-5-2.73v-3.72L12 15l5-2.73v3.72z"/></svg>
<span style="left:134.2px;top:1073.3px;font-size:25.6px;color:#cbd3e1;transform:scaleX(0.9940);transform-origin:0 50%;">Product Tours</span>
<svg style="left:76.5px;top:1139.9px;" width="37.3" height="37.3" viewBox="0 0 24 24"><path fill="#cbd3e1" d="M19 5v2h-4V5h4M9 5v6H5V5h4m10 8v6h-4v-6h4M9 17v2H5v-2h4M21 3h-8v6h8V3zM11 3H3v10h8V3zm10 8h-8v10h8V11zm-10 4H3v6h8v-6z"/></svg>
<span style="left:134.2px;top:1152.7px;font-size:25.6px;color:#cbd3e1;transform:scaleX(0.9911);transform-origin:0 50%;">Dashboard</span>
<svg style="left:76.5px;top:1219.3px;" width="37.3" height="37.3" viewBox="0 0 24 24"><path fill="#cbd3e1" d="M4 6H2v14c0 1.1.9 2 2 2h14v-2H4V6zm16-4H8c-1.1 0-2 .9-2 2v12c0 1.1.9 2 2 2h12c1.1 0 2-.9 2-2V4c0-1.1-.9-2-2-2zm0 14H8V4h12v12zM12 5.5v9l6-4.5z"/></svg>
<span style="left:134.2px;top:1232.1px;font-size:25.6px;color:#cbd3e1;">Video Library</span>
<svg style="left:76.5px;top:1298.7px;" width="37.3" height="37.3" viewBox="0 0 24 24"><path fill="#cbd3e1" d="M21 5c-1.11-.35-2.33-.5-3.5-.5-1.95 0-4.05.4-5.5 1.5-1.45-1.1-3.55-1.5-5.5-1.5S2.45 4.9 1 6v14.65c0 .25.25.5.5.5.1 0 .15-.05.25-.05C3.1 20.45 5.05 20 6.5 20c1.95 0 4.05.4 5.5 1.5 1.35-.85 3.8-1.5 5.5-1.5 1.65 0 3.35.3 4.75 1.05.1.05.15.05.25.05.25 0 .5-.25.5-.5V6c-.6-.45-1.25-.75-2-1zm0 13.5c-1.1-.35-2.3-.5-3.5-.5-1.7 0-4.15.65-5.5 1.5V8c1.35-.85 3.8-1.5 5.5-1.5 1.2 0 2.4.15 3.5.5v11.5zM17.5 10.5c.88 0 1.73.09 2.5.26V9.24c-.79-.15-1.64-.24-2.5-.24-1.7 0-3.24.29-4.5.83v1.66c1.13-.64 2.7-.99 4.5-.99zM13 12.49v1.66c1.13-.64 2.7-.99 4.5-.99.88 0 1.73.09 2.5.26V11.9c-.79-.15-1.64-.24-2.5-.24-1.7 0-3.24.3-4.5.83zm4.5 1.84c-1.7 0-3.24.29-4.5.83v1.66c1.13-.64 2.7-.99 4.5-.99.88 0 1.73.09 2.5.26v-1.52c-.79-.16-1.64-.24-2.5-.24z"/></svg>
<span style="left:134.2px;top:1311.5px;font-size:25.6px;color:#cbd3e1;transform:scaleX(1.0305);transform-origin:0 50%;">Documentation</span>
<svg style="left:76.5px;top:1378.1px;" width="37.3" height="37.3" viewBox="0 0 24 24"><path fill="#cbd3e1" d="M12 3L1 9l4 2.18v6L12 21l7-3.82v-6l2-1.09V17h2V9L12 3zm6.82 6L12 12.72 5.18 9 12 5.28 18.82 9zM17 15.99l-5 2.73-5-2.73v-3.72L12 15l5-2.73v3.72z"/></svg>
<span style="left:134.2px;top:1390.9px;font-size:25.6px;color:#cbd3e1;transform:scaleX(0.9653);transform-origin:0 50%;">Learning Paths</span>
<svg style="left:76.5px;top:1457.5px;" width="37.3" height="37.3" viewBox="0 0 24 24"><path fill="#cbd3e1" d="M9.68 13.69L12 11.93l2.31 1.76-.88-2.85L15.75 9h-2.84L12 6.19 11.09 9H8.25l2.31 1.84-.88 2.85zM20 10c0-4.42-3.58-8-8-8s-8 3.58-8 8c0 2.03.76 3.87 2 5.28V23l6-2 6 2v-7.72c1.24-1.41 2-3.25 2-5.28zm-8-6c3.31 0 6 2.69 6 6s-2.69 6-6 6-6-2.69-6-6 2.69-6 6-6zm0 15l-4 1.02v-3.1c1.18.68 2.54 1.08 4 1.08s2.82-.4 4-1.08v3.1L12 19z"/></svg>
<span style="left:134.2px;top:1470.3px;font-size:25.6px;color:#cbd3e1;transform:scaleX(1.0072);transform-origin:0 50%;">Certifications</span>
<svg style="left:76.5px;top:1536.9px;" width="37.3" height="37.3" viewBox="0 0 24 24"><path fill="#cbd3e1" d="M9 21c0 .55.45 1 1 1h4c.55 0 1-.45 1-1v-1H9v1zm3-19C8.14 2 5 5.14 5 9c0 2.38 1.19 4.47 3 5.74V17c0 .55.45 1 1 1h6c.55 0 1-.45 1-1v-2.26c1.81-1.27 3-3.36 3-5.74 0-3.86-3.14-7-7-7zm2.85 11.1l-.85.6V16h-4v-2.3l-.85-.6C7.8 12.16 7 10.63 7 9c0-2.76 2.24-5 5-5s5 2.24 5 5c0 1.63-.8 3.16-2.15 4.1z"/></svg>
<span style="left:134.2px;top:1549.7px;font-size:25.6px;color:#cbd3e1;transform:scaleX(0.9433);transform-origin:0 50%;">Best Practices</span>
<div class="sdiv" style="top:1620px"></div>
<span style="left:42.1px;top:1644.6px;font-size:20.8px;color:#94a3b8;font-weight:700;transform:scaleX(1.0085);transform-origin:0 50%;">SCENARIO 1</span>
<svg style="left:56px;top:1712px;" width="37.3" height="37.3" viewBox="0 0 24 24"><path fill="#cbd3e1" d="M19 9l1.25-2.75L23 5l-2.75-1.25L19 1l-1.25 2.75L15 5l2.75 1.25L19 9zm-7.5.5L9 4 6.5 9.5 1 12l5.5 2.5L9 20l2.5-5.5L17 12l-5.5-2.5zM19 15l-1.25 2.75L15 19l2.75 1.25L19 23l1.25-2.75L23 19l-2.75-1.25L19 15z"/></svg>
<span style="left:113.7px;top:1707.9px;font-size:24px;color:#cbd3e1;transform:scaleX(1.0191);transform-origin:0 50%;-webkit-text-stroke:0.95px #cbd3e1;">Campaign</span>
<span style="left:113.7px;top:1742.5px;font-size:24px;color:#cbd3e1;transform:scaleX(1.0258);transform-origin:0 50%;-webkit-text-stroke:0.95px #cbd3e1;">Performance Analyzer</span>
<div class="sdiv" style="top:1805.6px"></div>
<span style="left:42.1px;top:1831.7px;font-size:20.8px;color:#94a3b8;font-weight:700;transform:scaleX(1.0085);transform-origin:0 50%;">SCENARIO 2</span>
<div style="left:36.2px;top:1876.4px;width:353.6px;height:98.4px;background:linear-gradient(90deg,rgba(45,66,140,.22),rgba(45,66,140,.34));border:1.6px solid rgba(255,255,255,.11);border-radius:13px;box-shadow:0 4px 18px rgba(0,0,0,.18)"></div>
<div style="left:36.8px;top:1895.8px;width:6.2px;height:58.5px;background:linear-gradient(180deg,#3b5bdb,#4f6ef7);border-radius:0 4px 4px 0"></div>
<svg style="left:57.4px;top:1899.5px;" width="37.3" height="37.3" viewBox="0 0 24 24"><path fill="#fff" d="M13 8.57c-.79 0-1.43.64-1.43 1.43s.64 1.43 1.43 1.43 1.43-.64 1.43-1.43-.64-1.43-1.43-1.43zM13 3C9.25 3 6.2 5.94 6.02 9.64L4.1 12.2c-.25.33-.01.8.4.8H6v3c0 1.1.9 2 2 2h1v3h7v-4.68c2.36-1.12 4-3.53 4-6.32 0-3.87-3.13-7-7-7zm3 7c0 .13-.01.26-.02.39l.83.66c.08.06.1.16.05.25l-.8 1.39c-.05.09-.16.12-.24.09l-.99-.4c-.21.16-.43.29-.67.39L14 13.83c-.01.1-.1.17-.2.17h-1.6c-.1 0-.18-.07-.2-.17l-.15-1.06c-.25-.1-.47-.23-.68-.39l-.99.4c-.09.03-.2 0-.25-.09l-.8-1.39c-.05-.08-.03-.19.05-.25l.84-.66c-.01-.13-.02-.26-.02-.39s.02-.27.04-.39l-.85-.66c-.08-.06-.1-.16-.05-.26l.8-1.38c.05-.09.15-.12.24-.09l1 .4c.2-.15.43-.29.67-.39L12 6.17c.02-.1.1-.17.2-.17h1.6c.1 0 .18.07.2.17l.15 1.06c.24.1.46.23.67.39l1-.4c.09-.03.2 0 .24.09l.8 1.38c.05.09.03.2-.05.26l-.85.66c.03.12.04.25.04.39z"/></svg>
<span style="left:114.4px;top:1894.2px;font-size:24px;color:#fff;transform:scaleX(1.0258);transform-origin:0 50%;-webkit-text-stroke:0.95px #fff;">AI Campaign Brief</span>
<span style="left:114.4px;top:1929.6px;font-size:24px;color:#fff;transform:scaleX(1.0318);transform-origin:0 50%;-webkit-text-stroke:0.95px #fff;">Generator</span>
<div class="sdiv" style="top:1996.4px"></div>
<span style="left:42.1px;top:2020.7px;font-size:20.8px;color:#94a3b8;font-weight:700;transform:scaleX(1.0085);transform-origin:0 50%;">SCENARIO 3</span>
<svg style="left:55.5px;top:2076.5px;" width="37.3" height="37.3" viewBox="0 0 24 24"><path fill="#cbd3e1" d="M21 8c-1.45 0-2.26 1.44-1.93 2.51l-3.55 3.56c-.3-.09-.74-.09-1.04 0l-2.55-2.55C12.27 10.45 11.46 9 10 9c-1.45 0-2.27 1.44-1.93 2.52l-4.56 4.55C2.44 15.74 1 16.55 1 18c0 1.1.9 2 2 2 1.45 0 2.26-1.44 1.93-2.51l4.55-4.56c.3.09.74.09 1.04 0l2.55 2.55C12.73 16.55 13.54 18 15 18c1.45 0 2.27-1.44 1.93-2.52l3.56-3.55c1.07.33 2.51-.48 2.51-1.93 0-1.1-.9-2-2-2zM15 9l.94-2.07L18 6l-2.06-.93L15 3l-.92 2.07L12 6l2.08.93zM3.5 11L4 9l2-.5L4 8l-.5-2L3 8l-2 .5L3 9z"/></svg>
<span style="left:113.7px;top:2089.2px;font-size:24px;color:#cbd3e1;transform:scaleX(1.0757);transform-origin:0 50%;-webkit-text-stroke:0.95px #cbd3e1;">AI Auto-Optimizer</span>
</aside>
</body></html>
